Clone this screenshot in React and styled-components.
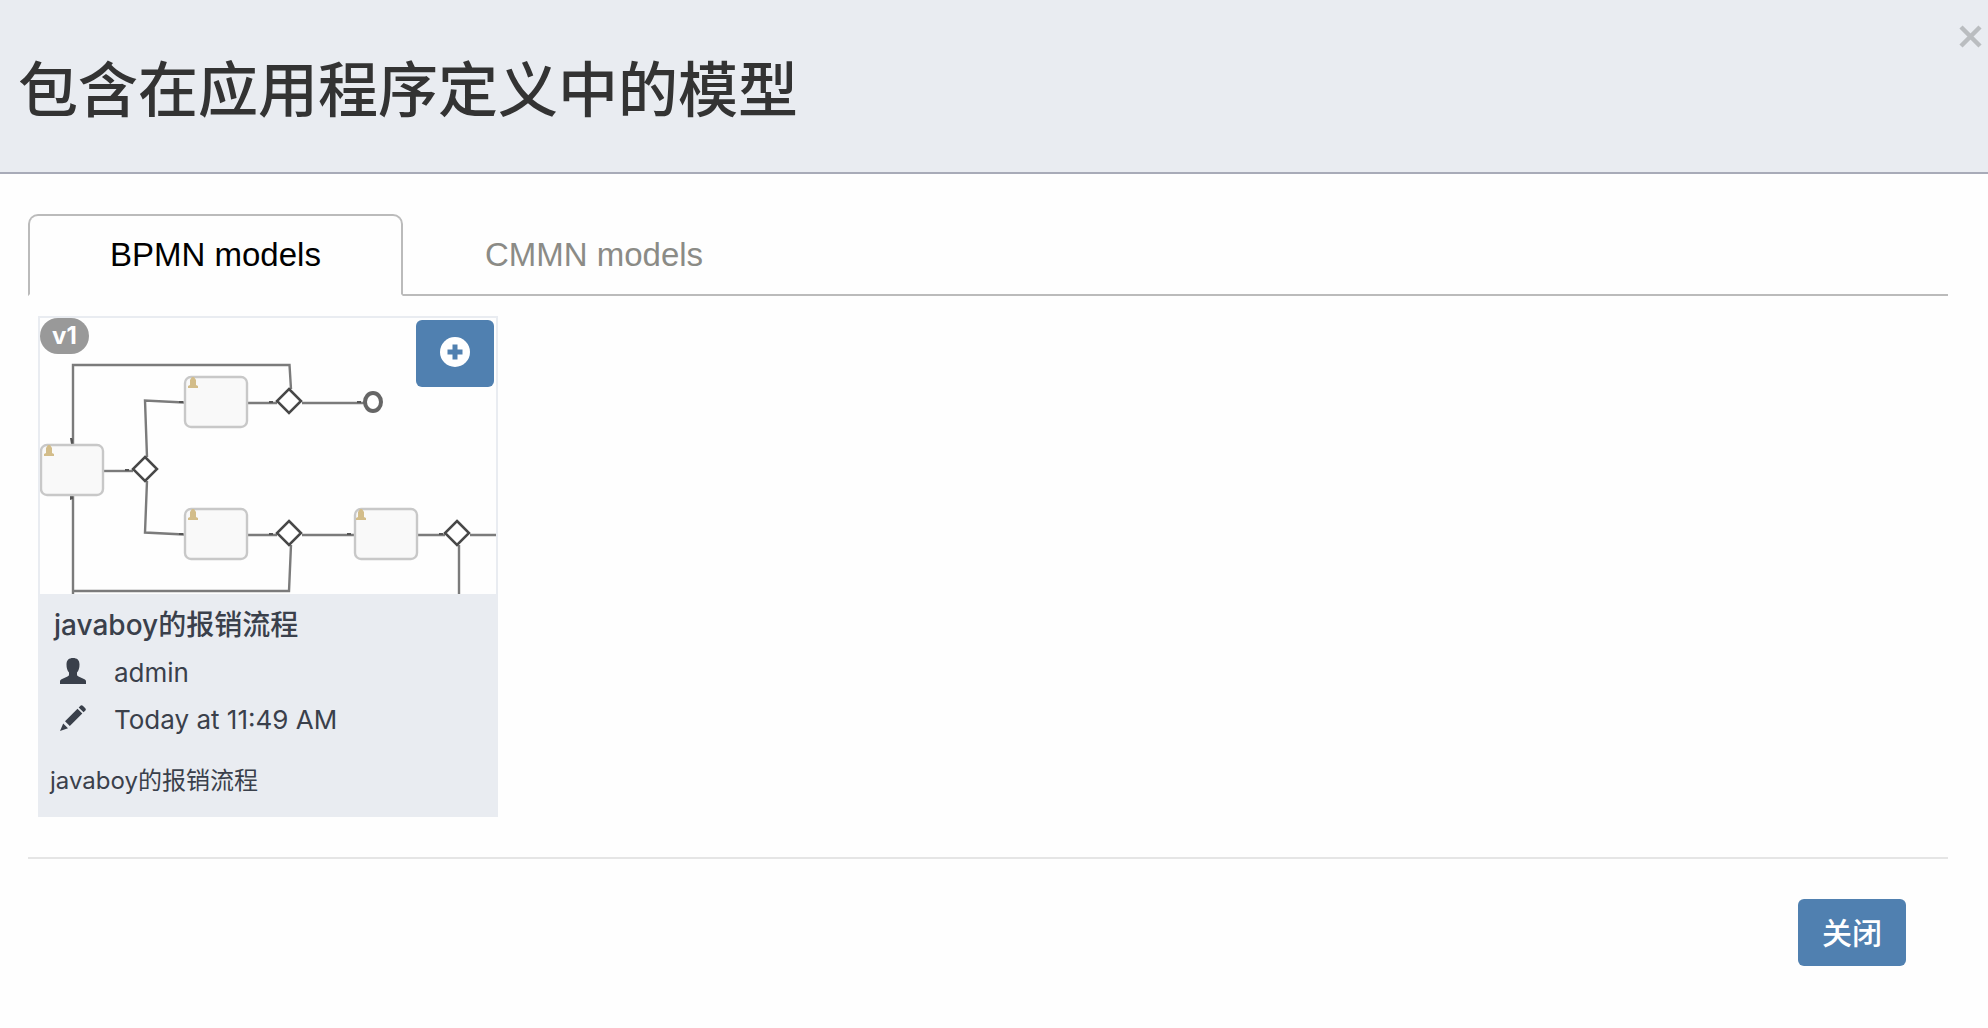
import React, { useState } from "react";
import styled, { createGlobalStyle } from "styled-components";

const Global = createGlobalStyle`
  *, *::before, *::after { box-sizing: border-box; }
  body {
    margin: 0;
    background: #fefefe;
    color: #333;
    font-family: Inter, "Liberation Sans", "Noto Sans CJK SC", sans-serif;
    font-size: 26px;
    line-height: 38px;
  }
  button { font-family: inherit; margin: 0; border: 0; cursor: pointer; }
`;

const Header = styled.header`
  display: flex;
  justify-content: space-between;
  align-items: flex-start;
  height: 174px;
  padding: 16px 5px 0 18px;
  background: #e9ecf1;
  border-bottom: 2px solid #a8abb8;
`;

const Title = styled.h2`
  margin: 30px 0 0;
  font-size: 60px;
  line-height: 88px;
  font-weight: 500;
`;

const Dismiss = styled.button`
  display: flex;
  padding: 9px 1px;
  background: none;
`;

const Main = styled.main`
  padding: 40px 40px 0 28px;
`;

const TabBar = styled.div`
  display: flex;
  border-bottom: 2px solid #bbb;
`;

const Tab = styled.button`
  height: 82px;
  margin-bottom: -2px;
  padding: 0 80px;
  border: 2px solid ${(p) => (p.$active ? "#bbb" : "transparent")};
  border-bottom-color: ${(p) => (p.$active ? "#fefefe" : "#bbb")};
  border-radius: ${(p) => (p.$active ? "10px 10px 0 0" : "0")};
  background: ${(p) => (p.$active ? "#fefefe" : "transparent")};
  color: ${(p) => (p.$active ? "#000" : "#8b8b86")};
  font-family: "Liberation Sans", sans-serif;
  font-size: 33px;
`;

const Panel = styled.section`
  padding: 20px 10px 40px;
`;

const Card = styled.article`
  position: relative;
  width: 460px;
  border: 2px solid #e9ecf1;
  background: #e9ecf1;
  color: #3a404b;
`;

const Diagram = styled.svg`
  display: block;
  width: 100%;
  background: #fefefe;
`;

const Version = styled.span`
  position: absolute;
  top: 0;
  left: 0;
  padding: 0 12px;
  border-radius: 18px;
  background: #999;
  color: #fff;
  font-size: 24px;
  line-height: 36px;
  font-weight: 700;
`;

const Primary = styled.button`
  display: flex;
  justify-content: center;
  align-items: center;
  height: 67px;
  padding: 0 24px 4px;
  border-radius: 6px;
  background: #5080b0;
  color: #fff;
  font-size: 30px;
  font-weight: 500;
`;

const AddButton = styled(Primary)`
  position: absolute;
  top: 2px;
  right: 2px;
`;

const Details = styled.div`
  padding: 10px 10px 15px;
`;

const Name = styled.h3`
  margin: 0 0 3px;
  padding: 0 4px;
  font-size: 28px;
  line-height: 42px;
  font-weight: 500;
`;

const Meta = styled.p`
  display: flex;
  align-items: center;
  gap: 28px;
  height: 47px;
  margin: 0;
  padding-left: 10px;

  svg { margin-bottom: 4px; }
`;

const Description = styled.p`
  margin: 19px 0 0;
  font-size: 24px;
`;

const Footer = styled.footer`
  display: flex;
  justify-content: flex-end;
  padding: 40px 42px;
  border-top: 2px solid #e5e5e5;
`;

const Task = ({ x, y, ix = 9 }) => (
  <g transform={`translate(${x} ${y})`}>
    <rect x="1" y="1" width="62" height="50" rx="6" fill="#f9f9f9" stroke="#c8c8c8" strokeWidth="2.400" />
    <path d={`M${ix - 5} 12v-2l2-1v-5l2-3h2l2 3v5l2 1v2z`} fill="#d3bd8a" />
  </g>
);

const Gateway = ({ x, y }) => (
  <path d={`M${x} ${y - 12}l12 12-12 12-12-12z`} fill="#fff" stroke="#484848" strokeWidth="2.500" />
);

const flows = [
  "M33 126V47H249.500L251 71",
  "M33 177V276M33 273H249L251 227",
  "M64 153H93",
  "M107 139L105 82.500L144 84.500",
  "M107 163L105 214.500L144 216.500",
  "M208 85H237M262 85H324",
  "M208 217H237M262 217H315M378 217H405M430 217H456M419 227V276",
];

const heads = [[87, 151], [141, 83], [141, 215], [231, 83], [231, 215], [319, 83], [309, 215], [401, 215]];

const ProcessDiagram = () => (
  <Diagram viewBox="0 0 456 276" role="img" aria-label="javaboy的报销流程">
    {flows.map((d) => (
      <path key={d} d={d} fill="none" stroke="#7b7b7b" strokeWidth="2.400" />
    ))}
    {heads.map(([x, y]) => (
      <path key={`${x}-${y}`} d={`M${x - 2} ${y}h4v2h-4z`} fill="#555" />
    ))}
    <path d="M30 120h2l1 2v4h-2zM30 178h3v3l-3 1z" fill="#555" />
    <Task x={0} y={126} />
    <Task x={144} y={58} />
    <Task x={144} y={190} />
    <Task x={314} y={190} ix={7} />
    <Gateway x={105} y={151} />
    <Gateway x={249} y={83} />
    <Gateway x={249} y={215} />
    <Gateway x={417} y={215} />
    <ellipse cx="333" cy="84" rx="8" ry="9" fill="#fff" stroke="#666" strokeWidth="4" />
  </Diagram>
);

const UserIcon = () => (
  <svg width="26" height="26" viewBox="0 0 26 26" fill="currentColor" aria-hidden="true">
    <path d="M13 0c4 0 6.500 2 6.500 6.500 0 3.500-.8 6-2.500 8v2c0 1 .5 1.500 1.500 2l6 2.700c1 .5 1.500 1.200 1.500 2.300V26H0v-2.500c0-1.100.5-1.800 1.500-2.300l6-2.700c1-.5 1.500-1 1.500-2v-2c-1.700-2-2.500-4.500-2.500-8C6.500 2 9 0 13 0z" />
  </svg>
);

const PencilIcon = () => (
  <svg width="26" height="26" viewBox="0 0 26 26" fill="currentColor" aria-hidden="true">
    <path d="M20 1.200q1.200-1.800 2.800-.5l2.500 2.500q1.300 1.500-.4 2.800L23.500 7.300 18.700 2.600zM17.500 3.800l4.800 4.700L9.800 21 5 16.300zM3.200 18.500l4.800 4.700L0 26z" />
  </svg>
);

const PlusIcon = () => (
  <svg width="30" height="30" viewBox="0 0 30 30" aria-hidden="true">
    <circle cx="15" cy="15" r="15" fill="#fff" />
    <path d="M12.500 7.500h5v5h5v5h-5v5h-5v-5h-5v-5h5z" fill="#5080b0" />
  </svg>
);

export default function App() {
  const [tab, setTab] = useState("BPMN models");
  return (
    <>
      <Global />
      <Header>
        <Title>包含在应用程序定义中的模型</Title>
        <Dismiss aria-label="关闭">
          <svg width="23" height="23" viewBox="0 0 23 23" aria-hidden="true">
            <path d="M2 2l19 19M21 2l-19 19" stroke="#babdc0" strokeWidth="4.500" />
          </svg>
        </Dismiss>
      </Header>
      <Main>
        <TabBar role="tablist">
          {["BPMN models", "CMMN models"].map((name) => (
            <Tab key={name} role="tab" aria-selected={tab === name} $active={tab === name} onClick={() => setTab(name)}>
              {name}
            </Tab>
          ))}
        </TabBar>
        <Panel role="tabpanel">
          <Card>
            <ProcessDiagram />
            <Version>v1</Version>
            <AddButton aria-label="添加">
              <PlusIcon />
            </AddButton>
            <Details>
              <Name>javaboy的报销流程</Name>
              <Meta><UserIcon />admin</Meta>
              <Meta><PencilIcon />Today at 11:49 AM</Meta>
              <Description>javaboy的报销流程</Description>
            </Details>
          </Card>
        </Panel>
        <Footer>
          <Primary>关闭</Primary>
        </Footer>
      </Main>
    </>
  );
}
